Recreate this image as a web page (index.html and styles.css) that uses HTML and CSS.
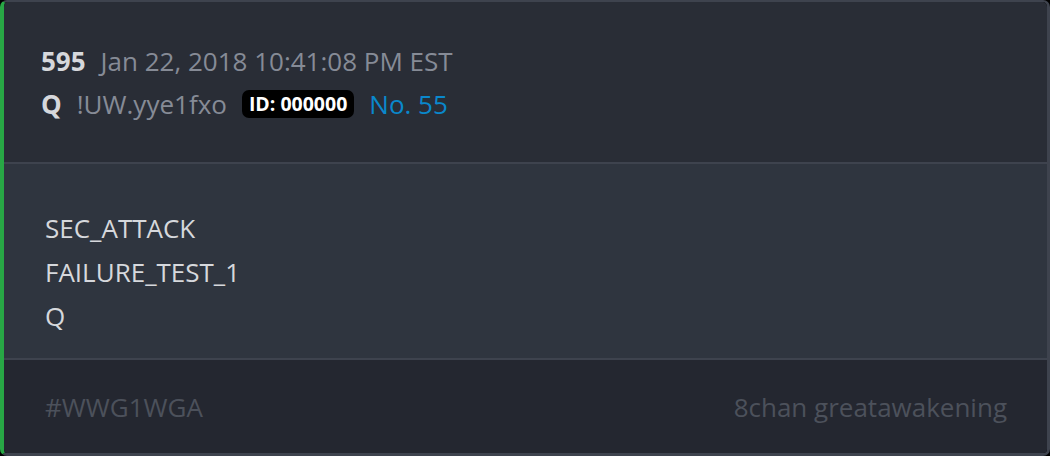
FILE: index.html
```html
<!DOCTYPE html>
<html lang="en">
<head>
    <meta charset="UTF-8">
    <title>Post 595</title>
    <link rel="stylesheet" href="styles.css">
</head>
<body>
    <div class="card">
        <div class="card-header">
            <div class="line">
                <span class="num">595</span>
                <span class="muted">Jan 22, 2018 10:41:08 PM EST</span>
            </div>
            <div class="line">
                <span class="num">Q</span>
                <span class="muted">!UW.yye1fxo</span>
                <span class="badge">ID: 000000</span>
                <span class="link">No. 55</span>
            </div>
        </div>
        <div class="card-body">
            <div>SEC_ATTACK</div>
            <div>FAILURE_TEST_1</div>
            <div>Q</div>
        </div>
        <div class="card-footer">
            <span>#WWG1WGA</span>
            <span>8chan greatawakening</span>
        </div>
    </div>
</body>
</html>
```

FILE: styles.css
```css
html, body {
    margin: 0;
    padding: 0;
    background: #000;
}
body {
    font-family: "Open Sans", sans-serif;
    font-size: 26px;
    color: #d6d8dc;
    width: 1050px;
    height: 456px;
}
.card {
    box-sizing: border-box;
    height: 456px;
    width: 1050px;
    border: 2px solid #3e434e;
    border-left: 4px solid #28a745;
    border-bottom-width: 3px;
    border-right-width: 3px;
    border-radius: 7px;
    overflow: hidden;
    display: flex;
    flex-direction: column;
}
.card-header {
    background: #292d36;
    padding: 37px 37px 0;
    height: 123px;
    border-bottom: 2px solid #3e434e;
}
.line {
    display: flex;
    align-items: center;
    gap: 15px;
    height: 43px;
}
.num {
    font-weight: bold;
    color: #d6d8dc;
}
.muted {
    color: #868b96;
}
.badge {
    background: #000;
    color: #fff;
    font-weight: bold;
    font-size: 19.5px;
    line-height: 24px;
    padding: 2px 7px;
    border-radius: 7px;
}
.link {
    color: #0a88cc;
}
.card-body {
    background: #2f353f;
    padding: 42px 41px 0;
    flex: 1;
    line-height: 44px;
    border-bottom: 2px solid #3e434e;
}
.card-footer {
    background: #242730;
    height: 93px;
    padding: 0 40px 0 41px;
    display: flex;
    justify-content: space-between;
    align-items: center;
    color: #4c515b;
}
```
